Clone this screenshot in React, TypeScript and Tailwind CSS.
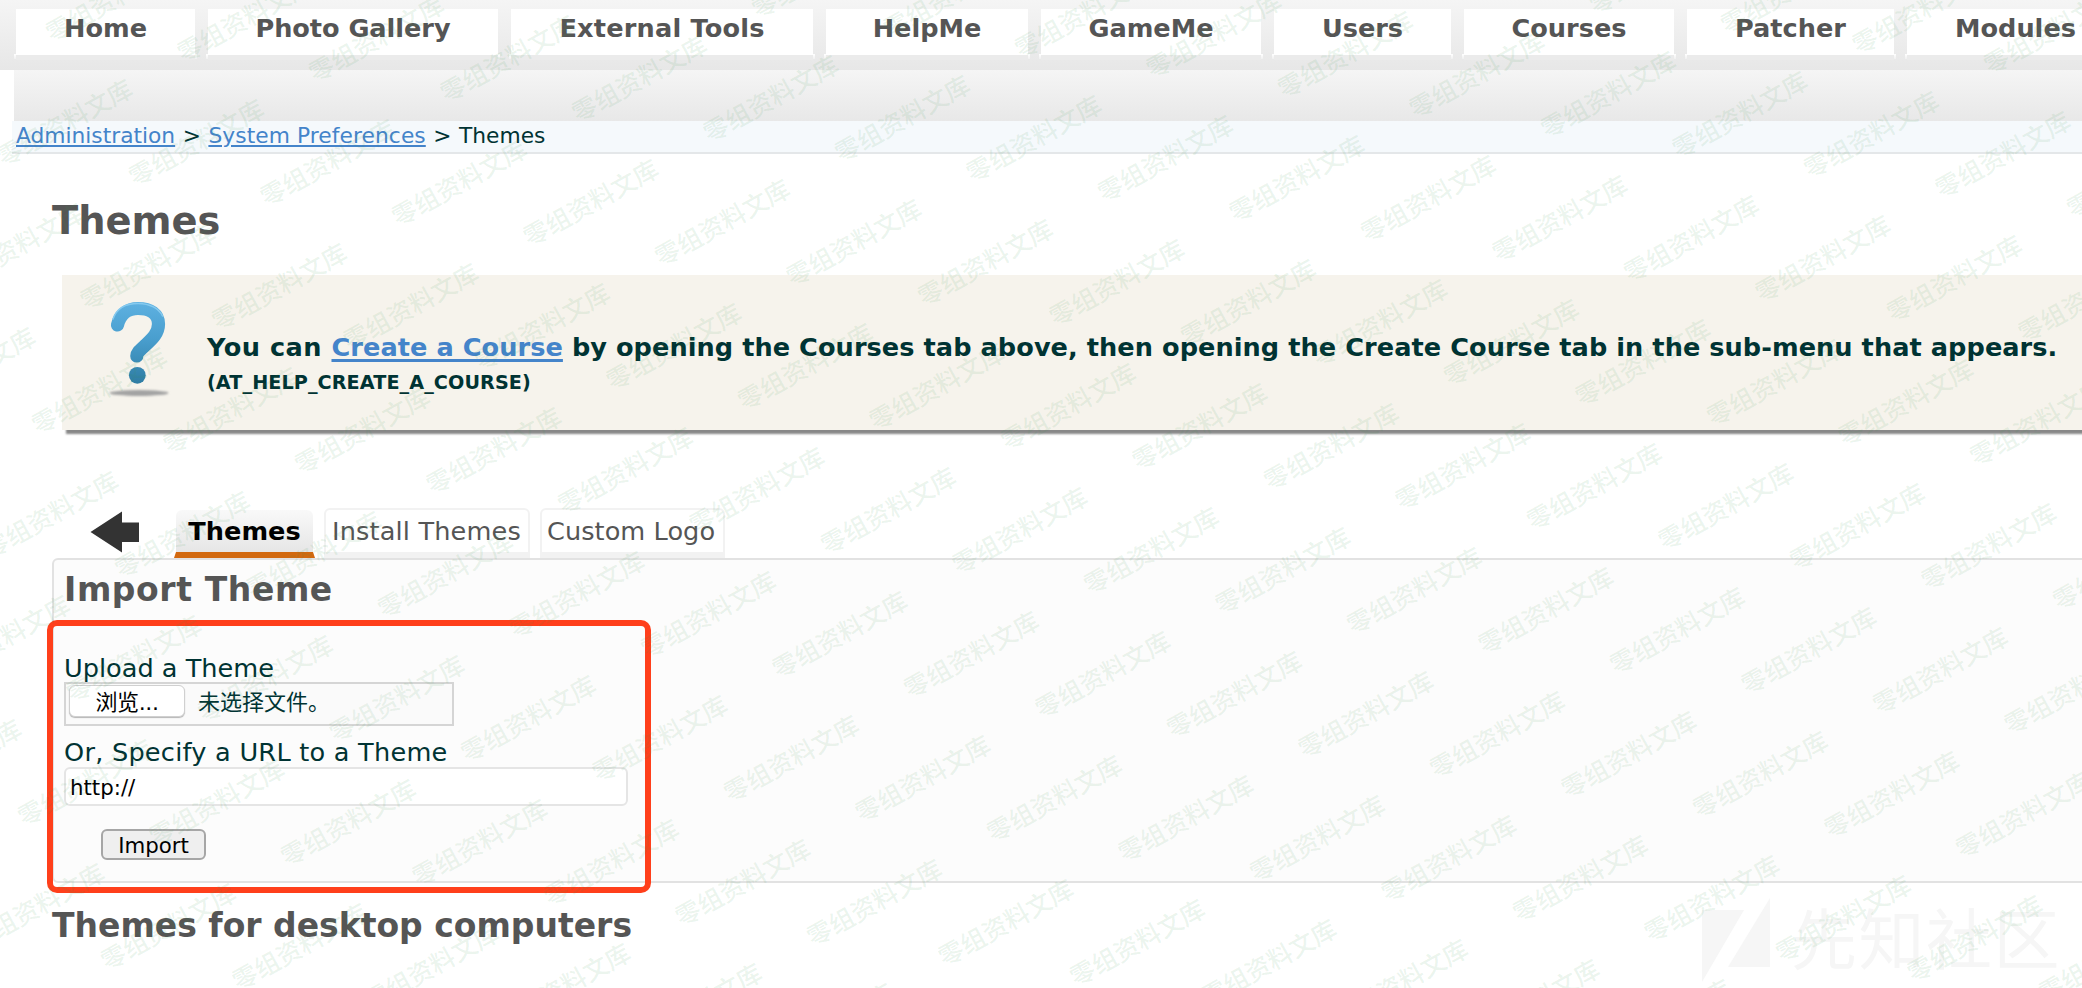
import React from "react";

const navItems: { label: string; width: string }[] = [
  { label: "Home", width: "w-[179px]" },
  { label: "Photo Gallery", width: "w-[290px] tracking-[-0.050px]" },
  { label: "External Tools", width: "w-[302px] tracking-[0.180px]" },
  { label: "HelpMe", width: "w-[202px]" },
  { label: "GameMe", width: "w-[220px]" },
  { label: "Users", width: "w-[177px]" },
  { label: "Courses", width: "w-[210px]" },
  { label: "Patcher", width: "w-[207px]" },
  { label: "Modules", width: "w-[217px]" },
];

function NavBar() {
  return (
    <nav className="flex h-[70px] gap-[13px] bg-linear-to-b from-[#f5f5f5] to-[#e7e7e7] pt-[9px] pl-[16px]">
      {navItems.map((item) => (
        <a
          key={item.label}
          className={`${item.width} relative h-[46px] shrink-0 bg-white text-center text-[25.6px] leading-[38px] font-bold whitespace-nowrap text-[#555]`}
        >
          {item.label}
          <span className="absolute top-[46px] left-0 h-[5px] w-full bg-[#ebebeb]" />
          <span className="absolute top-[45px] -left-[2px] h-[5px] w-[2px] bg-linear-to-b from-white to-[#f0f0f0]" />
          <span className="absolute top-[45px] -right-[2px] h-[5px] w-[2px] bg-linear-to-b from-white to-[#f0f0f0]" />
        </a>
      ))}
    </nav>
  );
}

function HelpIcon() {
  return (
    <svg className="h-[100px] w-[64px]" viewBox="0 0 64 100">
      <defs>
        <linearGradient id="q" x1="0" y1="0" x2="0" y2="84" gradientUnits="userSpaceOnUse">
          <stop offset="0" stopColor="#5fb2e2" />
          <stop offset="0.45" stopColor="#4a9fcf" />
          <stop offset="1" stopColor="#2e7ca3" />
        </linearGradient>
        <filter id="soft" x="-20%" y="-100%" width="140%" height="300%">
          <feGaussianBlur stdDeviation="1.2" />
        </filter>
      </defs>
      <ellipse cx="32" cy="93" rx="29.500" ry="3" fill="#a3a3a3" filter="url(#soft)" />
      <path
        d="M10.500 25C13 14.500 20 8.500 31 8.500C43.500 8.500 51.500 14 51.500 24C51.500 34 44 40 37.500 46C31.500 51.500 29.800 53 29.800 56"
        fill="none"
        stroke="url(#q)"
        strokeWidth="13.200"
        strokeLinecap="round"
      />
      <path
        d="M6 19C9.500 8.500 19 3.400 31 3.400C43 3.400 52 8.500 55.500 16"
        fill="none"
        stroke="#86caef"
        strokeWidth="1.500"
        strokeLinecap="round"
      />
      <circle cx="30.300" cy="75.300" r="8.400" fill="url(#q)" />
    </svg>
  );
}

const MARK = "零组资料文库";

function Watermarks() {
  const marks: { x: number; y: number }[] = [];
  for (let n = -4; n <= 7; n++) {
    for (let m = -4; m <= 20; m++) {
      const x = 148 + m * 131.5 - n * 48.5;
      const y = 267 + m * 20 + n * 124;
      if (x > -60 && x < 2140 && y > -40 && y < 1030) marks.push({ x, y });
    }
  }
  return (
    <svg className="pointer-events-none absolute inset-0 h-[988px] w-[2082px]" viewBox="0 0 2082 988">
      <g fill="#f6f6f6">
        <path d="M1702 910H1744L1702 982Z" />
        <path d="M1770 898V967H1728Z" />
        <text x="1791" y="964" fontSize="66" letterSpacing="1.500" className="font-['Noto_Sans_CJK_SC',sans-serif]">
          先知社区
        </text>
      </g>
      <g
        fill="#3c9650"
        fillOpacity="0.1"
        fontSize="25"
        fontWeight="500"
        textAnchor="middle"
        className="font-['Noto_Sans_CJK_SC',sans-serif]"
      >
        {marks.map((p, i) => (
          <text key={i} transform={`translate(${p.x} ${p.y}) rotate(-29)`} y="9">
            {MARK}
          </text>
        ))}
      </g>
    </svg>
  );
}

export default function App() {
  return (
    <div className="relative h-[988px] w-full overflow-hidden bg-white font-['DejaVu_Sans','Noto_Sans_CJK_SC',sans-serif] text-[#003333]">
      <NavBar />
      <div className="ml-[14px] h-[51px] bg-linear-to-b from-[#f5f5f5] to-[#e8e8e8]" />
      <div className="ml-[12px] flex h-[33px] gap-[8.500px] border-b-2 border-[#e4e7e9] bg-[#f5f9fc] pl-[4px] text-[21.750px] leading-[29px] whitespace-nowrap">
        <a className="text-[#4484ca] underline decoration-[1.5px] underline-offset-[2px]">Administration</a>
        <span className="-mx-px">&gt;</span>
        <a className="tracking-[0.080px] text-[#4484ca] underline decoration-[1.5px] underline-offset-[2px]">
          System Preferences
        </a>
        <span className="-mx-px">&gt;</span>
        <span>Themes</span>
      </div>

      <h1 className="mt-[44px] ml-[52px] text-[38.400px] leading-[46px] font-bold text-[#555]">Themes</h1>

      <section className="mt-[31px] ml-[62px] flex h-[155px] w-[2100px] bg-[#f6f3ec] shadow-[4px_4px_2px_#888]">
        <div className="w-[145px] pt-[25px] pl-[45px]">
          <HelpIcon />
        </div>
        <div className="pt-[52px] font-bold whitespace-nowrap">
          <p className="text-[25.600px] leading-[40px] tracking-[0.060px]">
            <span className="tracking-[0.500px]">You can </span>
            <a className="text-[#4484ca] underline decoration-[3px] underline-offset-[3px]">Create a Course</a> by
            opening the Courses tab above, then opening the Create Course tab in the sub-menu that appears.
          </p>
          <p className="text-[19.200px] leading-[31px] tracking-[0.080px]">(AT_HELP_CREATE_A_COURSE)</p>
        </div>
      </section>

      <div className="mt-[78px] flex h-[50px] items-end whitespace-nowrap">
        <svg className="mb-[5px] ml-[90px] h-[42px] w-[49px]" viewBox="0 0 49 42">
          <path d="M0.500 21L32 0.500V11.500H49V31H32V41.500Z" fill="#333" />
        </svg>
        <div className="ml-[35px] w-[141px]">
          <div className="mx-[2px] h-[42px] rounded-t-[6px] bg-linear-to-b from-[#f9f9f9] to-[#e6e6e6] text-center text-[25.600px] leading-[42px] font-bold text-black">
            Themes
          </div>
          <div className="h-[6px] border-x-2 border-b-[6px] border-x-transparent border-b-[#d2690f]" />
        </div>
        <div className="ml-[9px] h-[50px] w-[206px] rounded-t-[6px] border-2 border-b-[6px] border-[#f2f2f2] bg-white pl-[6px] text-[25.600px] leading-[42px] tracking-[0.150px] text-[#555]">
          Install Themes
        </div>
        <div className="ml-[10px] h-[50px] w-[185px] rounded-t-[6px] border-2 border-b-[6px] border-[#f2f2f2] bg-white pl-[5px] text-[25.600px] leading-[42px] tracking-[0.050px] text-[#555]">
          Custom Logo
        </div>
      </div>

      <section className="ml-[52px] h-[325px] w-[2100px] rounded-[6px] border-2 border-[#e2e2e2] bg-[#fcfcfc] pt-[10px] pl-[10px]">
        <h2 className="text-[33px] leading-[40px] font-bold tracking-[0.600px] text-[#555]">Import Theme</h2>
        <p className="mt-[43px] text-[25.600px] leading-[30px]">Upload a Theme</p>
        <div className="-mt-px flex h-[44px] w-[390px] items-start border-2 border-[#d5d5d5] bg-[#fafafa] pt-px pl-[3px] text-[22px]">
          <button className="h-[32px] w-[116px] rounded-[6px] border border-[#d0d0d0] bg-white leading-[33px] tracking-[-0.400px] text-black shadow-[0_1px_1px_#b5b5b5]">
            浏览...
          </button>
          <span className="ml-[13px] leading-[35px]">未选择文件。</span>
        </div>
        <p className="mt-[11px] text-[25.600px] leading-[30px] tracking-[0.240px]">Or, Specify a URL to a Theme</p>
        <div className="h-[39px] w-[564px] rounded-[6px] border-2 border-[#e5e5e5] bg-white pl-[4px] text-[21.300px] leading-[37px] text-black">
          http://
        </div>
        <button className="mt-[23px] ml-[37px] block h-[31px] w-[105px] rounded-[6px] border-2 border-[#a6a6a6] bg-[#efefef] text-[21.300px] leading-[29px] text-black">
          Import
        </button>
      </section>

      <h2 className="mt-[23px] ml-[52px] text-[33px] leading-[40px] font-bold text-[#555]">
        Themes for desktop computers
      </h2>

      <div className="absolute top-[620px] left-[47px] h-[273px] w-[604px] rounded-[10px] border-[6px] border-[#ff3f1b]" />
      <Watermarks />
    </div>
  );
}
